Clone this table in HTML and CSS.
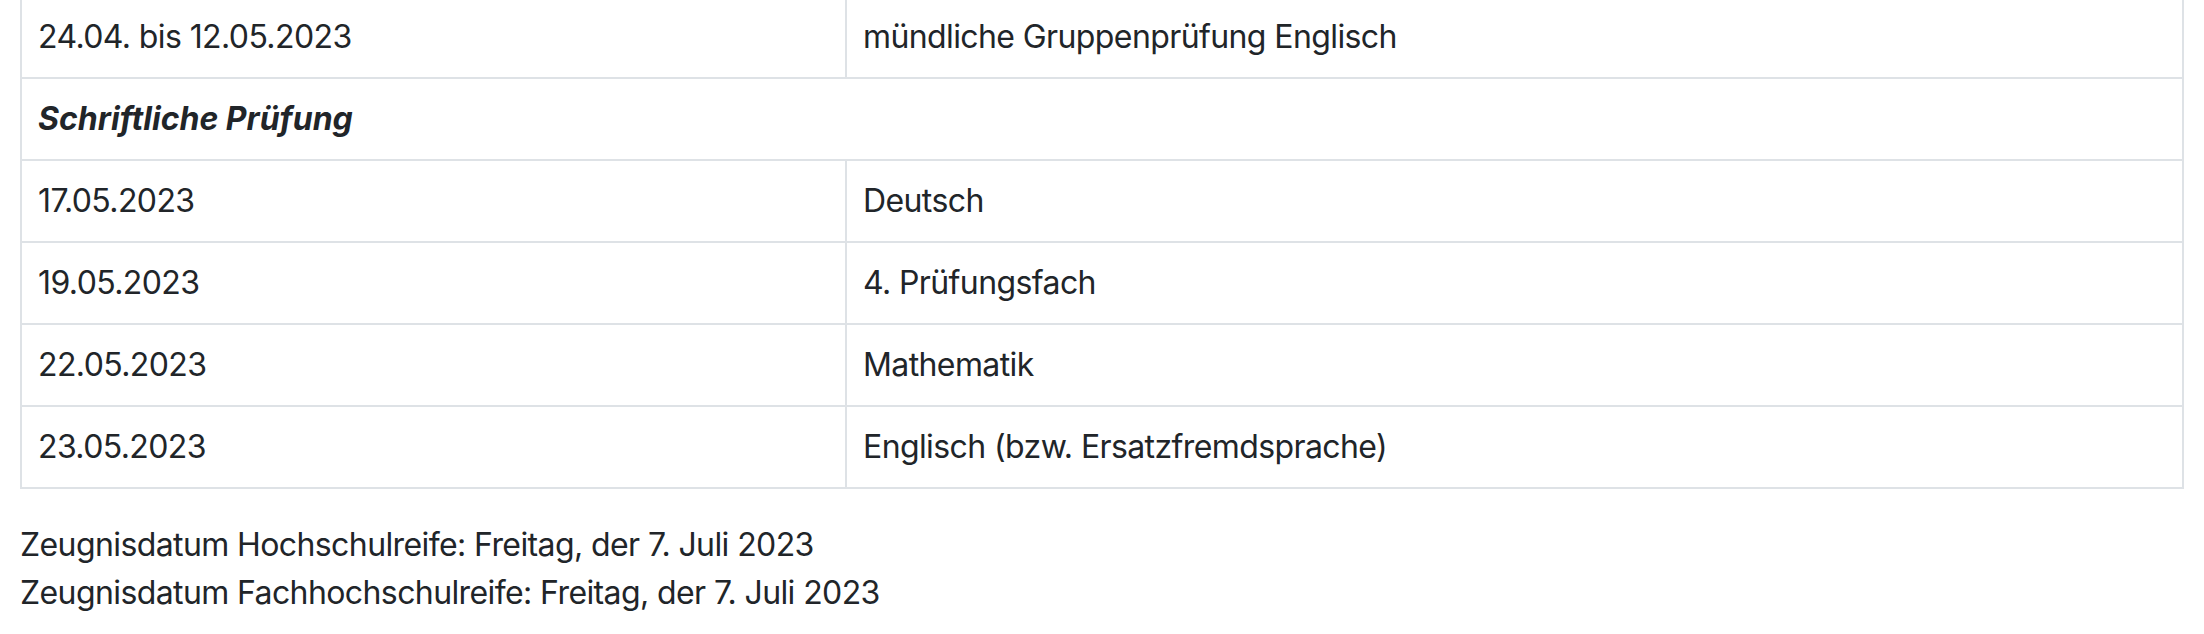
FILE: index.html
```html
<!DOCTYPE html>
<html lang="de">
<head>
<meta charset="utf-8">
<title>Prüfungstermine</title>
<link rel="stylesheet" href="styles.css">
</head>
<body>
<main class="content">
  <table class="exam-table">
    <colgroup>
      <col class="col-date">
      <col class="col-subject">
    </colgroup>
    <tbody>
      <tr><td>24.04. bis 12.05.2023</td><td>mündliche Gruppenprüfung Englisch</td></tr>
      <tr><td colspan="2" class="section"><em>Schriftliche Prüfung</em></td></tr>
      <tr><td>17.05.2023</td><td>Deutsch</td></tr>
      <tr><td>19.05.2023</td><td>4. Prüfungsfach</td></tr>
      <tr><td>22.05.2023</td><td>Mathematik</td></tr>
      <tr><td>23.05.2023</td><td>Englisch (bzw. Ersatzfremdsprache)</td></tr>
    </tbody>
  </table>
  <p class="note">Zeugnisdatum Hochschulreife: Freitag, der 7. Juli 2023<br>Zeugnisdatum Fachhochschulreife: Freitag, der 7. Juli 2023</p>
</main>
</body>
</html>
```

FILE: styles.css
```css
html, body {
  margin: 0;
  padding: 0;
  background: #ffffff;
}

body {
  font-family: Inter, "Liberation Sans", sans-serif;
  font-size: 32px;
  line-height: 48px;
  letter-spacing: -0.6px;
  color: #212529;
}

.content {
  padding: 0 20px 0 20px;
}

.exam-table {
  width: 2164px;
  margin-top: -5px;
  margin-bottom: 32px;
  border-collapse: collapse;
  table-layout: fixed;
}

.col-date {
  width: 825px;
}

.exam-table td {
  border: 2px solid #dee2e6;
  padding: 16px 16px;
  vertical-align: top;
}

.section em {
  font-style: italic;
  font-weight: 700;
  letter-spacing: 0;
}

.note {
  margin: 0;
}
```
